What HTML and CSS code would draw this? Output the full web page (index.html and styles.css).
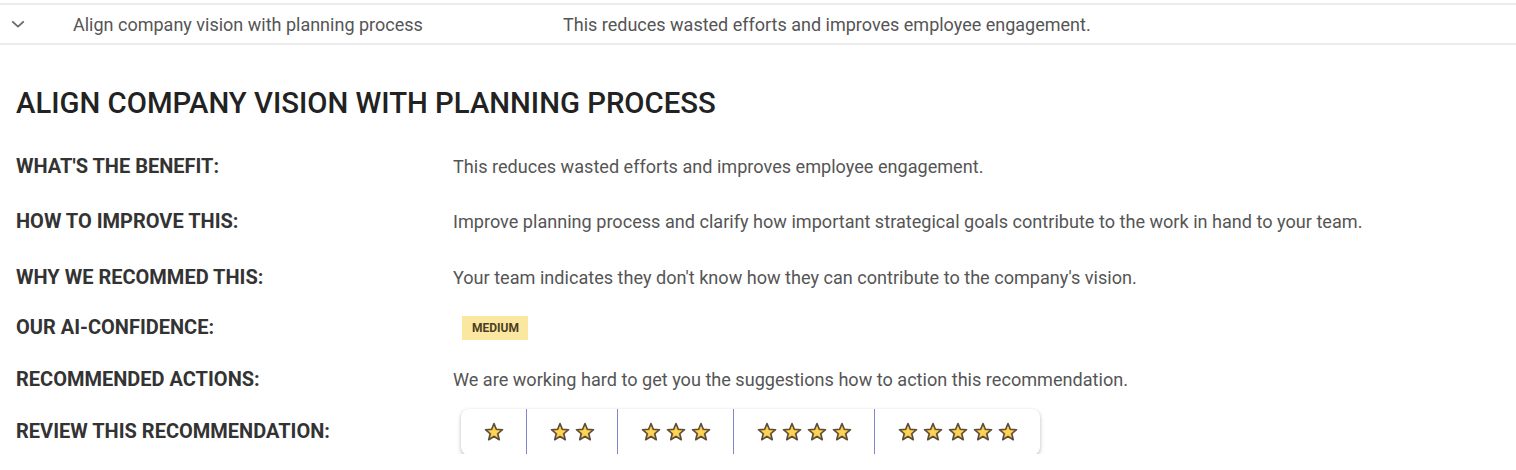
FILE: index.html
```html
<!DOCTYPE html>
<html lang="en">
<head>
<meta charset="utf-8">
<title>Recommendation</title>
<link rel="stylesheet" href="styles.css">
</head>
<body>
<svg class="defs" width="0" height="0" aria-hidden="true">
  <defs>
    <symbol id="star" viewBox="0 0 20 20">
      <polygon points="10,1.5 12.35,7.26 18.56,7.72 13.8,11.74 15.29,17.78 10,14.5 4.71,17.78 6.2,11.74 1.44,7.72 7.65,7.26" fill="#f5b82e" stroke="#5a4d3e" stroke-width="1.6" stroke-linejoin="round"/>
      <polygon points="10,4.8 11.3,8.6 15.2,8.9 12.2,11.3 13.2,15 10,13 6.8,15 7.8,11.3 4.8,8.9 8.7,8.6" fill="#fbd45a"/>
    </symbol>
  </defs>
</svg>

<div class="row-head">
  <span class="chev">
    <svg width="14" height="8" viewBox="0 0 14 8"><path d="M1.2 1.3 L7 6.6 L12.8 1.3" fill="none" stroke="#666" stroke-width="1.7"/></svg>
  </span>
  <span class="row-title">Align company vision with planning process</span>
  <span class="row-desc">This reduces wasted efforts and improves employee engagement.</span>
</div>

<section class="detail">
  <h2 class="detail-title">ALIGN COMPANY VISION WITH PLANNING PROCESS</h2>
  <div class="info-grid">
    <div class="label">WHAT'S THE BENEFIT:</div>
    <div class="value">This reduces wasted efforts and improves employee engagement.</div>

    <div class="label">HOW TO IMPROVE THIS:</div>
    <div class="value">Improve planning process and clarify how important strategical goals contribute to the work in hand to your team.</div>

    <div class="label">WHY WE RECOMMED THIS:</div>
    <div class="value">Your team indicates they don't know how they can contribute to the company's vision.</div>

    <div class="label">OUR AI-CONFIDENCE:</div>
    <div class="value"><span class="badge">MEDIUM</span></div>

    <div class="label">RECOMMENDED ACTIONS:</div>
    <div class="value">We are working hard to get you the suggestions how to action this recommendation.</div>

    <div class="label">REVIEW THIS RECOMMENDATION:</div>
    <div class="value">
      <div class="rating">
        <button class="rate"><svg class="st"><use href="#star"/></svg></button>
        <button class="rate"><svg class="st"><use href="#star"/></svg><svg class="st"><use href="#star"/></svg></button>
        <button class="rate"><svg class="st"><use href="#star"/></svg><svg class="st"><use href="#star"/></svg><svg class="st"><use href="#star"/></svg></button>
        <button class="rate"><svg class="st"><use href="#star"/></svg><svg class="st"><use href="#star"/></svg><svg class="st"><use href="#star"/></svg><svg class="st"><use href="#star"/></svg></button>
        <button class="rate"><svg class="st"><use href="#star"/></svg><svg class="st"><use href="#star"/></svg><svg class="st"><use href="#star"/></svg><svg class="st"><use href="#star"/></svg><svg class="st"><use href="#star"/></svg></button>
      </div>
    </div>
  </div>
</section>
</body>
</html>
```

FILE: styles.css
```css
html, body {
  margin: 0;
  padding: 0;
  background: #fff;
}
body {
  font-family: Roboto, "Liberation Sans", sans-serif;
  color: #333;
  font-size: 18px;
}
.defs {
  position: absolute;
  width: 0;
  height: 0;
}
.row-head {
  margin-top: 3px;
  height: 38px;
  border-top: 2px solid #ececec;
  border-bottom: 2px solid #ececec;
  display: flex;
  align-items: center;
  color: #555;
  font-size: 18px;
}
.chev {
  width: 73px;
  padding-left: 11px;
  box-sizing: border-box;
  display: flex;
  align-items: center;
}
.row-title {
  width: 490px;
}
.detail {
  padding: 0 16px;
}
.detail-title {
  margin: 41px 0 20px;
  font-size: 29.3px;
  line-height: 34px;
  font-weight: 500;
  color: #222;
}
.info-grid {
  display: grid;
  grid-template-columns: 437px 1fr;
  grid-template-rows: 52px 58px 54px 46px 58px 46px;
  align-items: center;
}
.label {
  font-weight: 700;
  font-size: 20px;
  color: #333;
  line-height: 22px;
}
.value {
  color: #555;
  font-size: 18.1px;
  line-height: 22px;
  padding-top: 2px;
}
.badge {
  display: inline-block;
  margin-left: 9px;
  padding: 5px 9px 5px 10px;
  background: #fce7a0;
  color: #4b3f22;
  font-size: 12px;
  font-weight: 700;
  line-height: 14px;
  vertical-align: middle;
}
.rating {
  display: inline-flex;
  margin-left: 8px;
  background: #fff;
  border-radius: 8px;
  box-shadow: 0 2px 4px rgba(0,0,0,0.25), 0 0 2px rgba(0,0,0,0.06);
}
.rate {
  border: 0;
  background: transparent;
  padding: 0 22px 0 23px;
  height: 46px;
  display: flex;
  align-items: center;
  gap: 5px;
  cursor: pointer;
}
.rate + .rate {
  border-left: 1px solid #7f88cc;
}
.st {
  width: 20px;
  height: 20px;
  display: block;
}
```
